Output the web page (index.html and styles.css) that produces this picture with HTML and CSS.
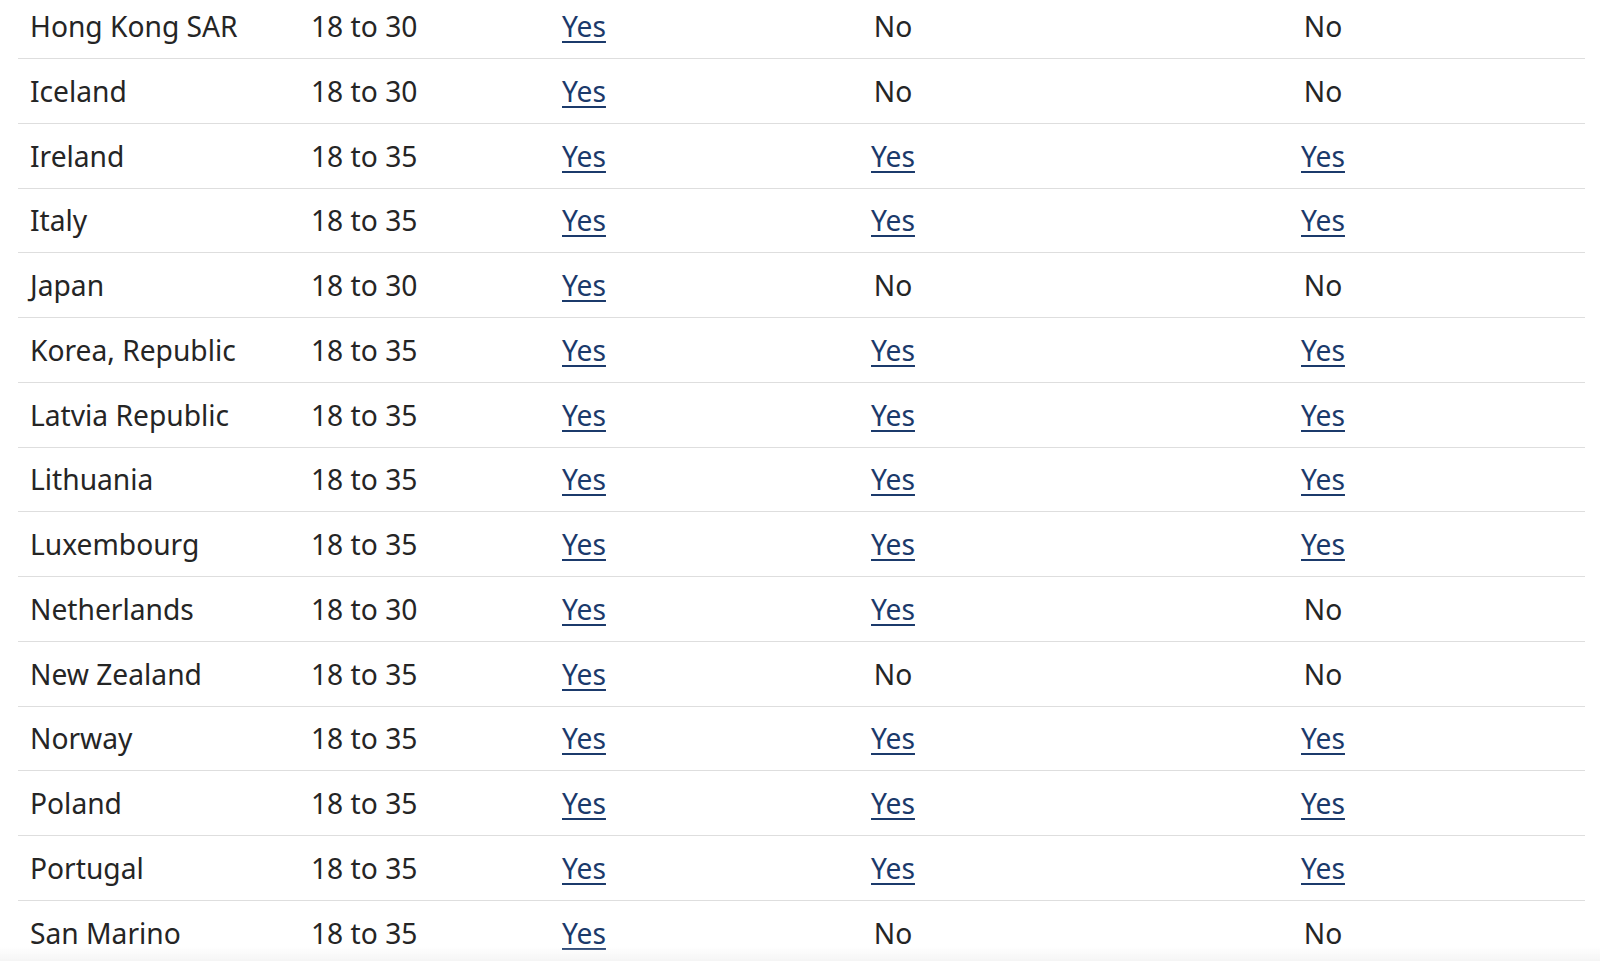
FILE: index.html
```html
<!DOCTYPE html>
<html lang="en">
<head>
<meta charset="utf-8">
<title>Working holiday eligibility</title>
<link rel="stylesheet" href="styles.css">
</head>
<body>
<div class="table">
  <div class="row"><div class="c1">Hong Kong SAR</div><div class="c2">18 to 30</div><div class="c3"><a href="#">Yes</a></div><div class="c4">No</div><div class="c5">No</div></div>
  <div class="row"><div class="c1">Iceland</div><div class="c2">18 to 30</div><div class="c3"><a href="#">Yes</a></div><div class="c4">No</div><div class="c5">No</div></div>
  <div class="row"><div class="c1">Ireland</div><div class="c2">18 to 35</div><div class="c3"><a href="#">Yes</a></div><div class="c4"><a href="#">Yes</a></div><div class="c5"><a href="#">Yes</a></div></div>
  <div class="row"><div class="c1">Italy</div><div class="c2">18 to 35</div><div class="c3"><a href="#">Yes</a></div><div class="c4"><a href="#">Yes</a></div><div class="c5"><a href="#">Yes</a></div></div>
  <div class="row"><div class="c1">Japan</div><div class="c2">18 to 30</div><div class="c3"><a href="#">Yes</a></div><div class="c4">No</div><div class="c5">No</div></div>
  <div class="row"><div class="c1">Korea, Republic</div><div class="c2">18 to 35</div><div class="c3"><a href="#">Yes</a></div><div class="c4"><a href="#">Yes</a></div><div class="c5"><a href="#">Yes</a></div></div>
  <div class="row"><div class="c1">Latvia Republic</div><div class="c2">18 to 35</div><div class="c3"><a href="#">Yes</a></div><div class="c4"><a href="#">Yes</a></div><div class="c5"><a href="#">Yes</a></div></div>
  <div class="row"><div class="c1">Lithuania</div><div class="c2">18 to 35</div><div class="c3"><a href="#">Yes</a></div><div class="c4"><a href="#">Yes</a></div><div class="c5"><a href="#">Yes</a></div></div>
  <div class="row"><div class="c1">Luxembourg</div><div class="c2">18 to 35</div><div class="c3"><a href="#">Yes</a></div><div class="c4"><a href="#">Yes</a></div><div class="c5"><a href="#">Yes</a></div></div>
  <div class="row"><div class="c1">Netherlands</div><div class="c2">18 to 30</div><div class="c3"><a href="#">Yes</a></div><div class="c4"><a href="#">Yes</a></div><div class="c5">No</div></div>
  <div class="row"><div class="c1">New Zealand</div><div class="c2">18 to 35</div><div class="c3"><a href="#">Yes</a></div><div class="c4">No</div><div class="c5">No</div></div>
  <div class="row"><div class="c1">Norway</div><div class="c2">18 to 35</div><div class="c3"><a href="#">Yes</a></div><div class="c4"><a href="#">Yes</a></div><div class="c5"><a href="#">Yes</a></div></div>
  <div class="row"><div class="c1">Poland</div><div class="c2">18 to 35</div><div class="c3"><a href="#">Yes</a></div><div class="c4"><a href="#">Yes</a></div><div class="c5"><a href="#">Yes</a></div></div>
  <div class="row"><div class="c1">Portugal</div><div class="c2">18 to 35</div><div class="c3"><a href="#">Yes</a></div><div class="c4"><a href="#">Yes</a></div><div class="c5"><a href="#">Yes</a></div></div>
  <div class="row"><div class="c1">San Marino</div><div class="c2">18 to 35</div><div class="c3"><a href="#">Yes</a></div><div class="c4">No</div><div class="c5">No</div></div>
</div>
<div class="fade"></div>
</body>
</html>
```
FILE: styles.css
```css
html, body {
  margin: 0;
  padding: 0;
  background: #ffffff;
  overflow: hidden;
}
body {
  font-family: "Noto Sans", "Open Sans", sans-serif;
  font-size: 28.2px;
  color: #252525;
}
.table {
  margin: -5.75px 15px 0 18px;
  width: 1567px;
}
.row {
  display: grid;
  grid-template-columns: 281px 251px 175px 336px 524px;
  align-items: center;
  height: 63.75px;
  border-bottom: 1px solid #dedede;
}
.c1, .c2, .c3 {
  padding-left: 12px;
  text-align: left;
}
.c4, .c5 {
  text-align: center;
}
a {
  color: #1b3a6b;
  text-decoration: underline;
  text-decoration-thickness: 2px;
  text-underline-offset: 4px;
}
.fade {
  position: fixed;
  left: 0;
  right: 0;
  bottom: 0;
  height: 14px;
  background: linear-gradient(to bottom, rgba(245,245,245,0), rgba(245,245,245,1));
  pointer-events: none;
}
```
